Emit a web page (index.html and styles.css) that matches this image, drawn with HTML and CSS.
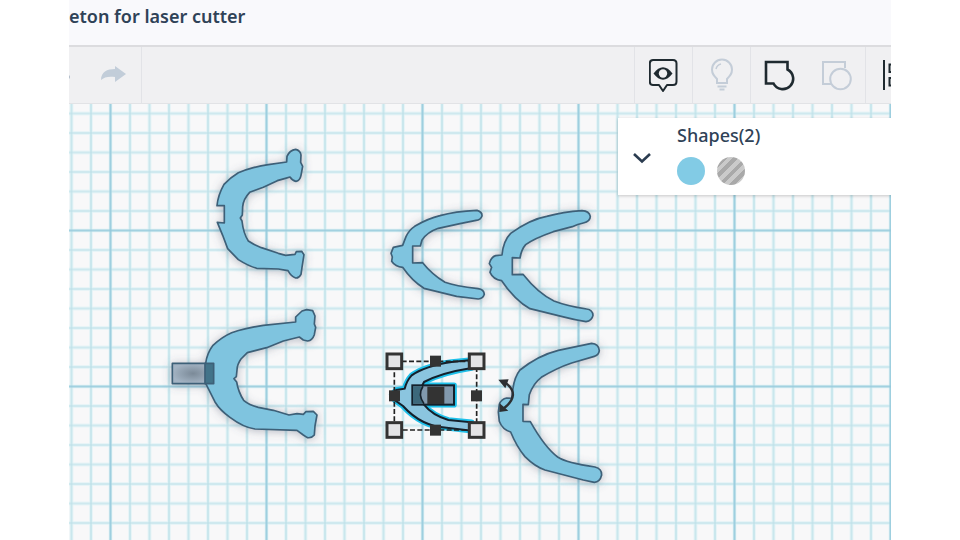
FILE: index.html
```html
<!DOCTYPE html>
<html lang="en">
<head>
    <meta charset="UTF-8">
    <meta name="viewport" content="width=device-width, initial-scale=1.0">
    <title>Shape Editor</title>
    <link rel="stylesheet" href="styles.css">
</head>
<body>
    <div class="editor">

        <header class="title-bar">
            <h1 class="title">eton for laser cutter</h1>
        </header>

        <!-- Toolbar -->
        <div class="toolbar">
            <div class="tool-group history">
                <button type="button" class="tool cut-left" aria-label="Undo">
                    <svg width="2" height="10" viewBox="0 0 2 10"><path d="M0 5Q2 7 0 9" fill="#aeb9c6"/></svg>
                </button>
                <button type="button" class="tool" aria-label="Redo">
                    <svg width="26" height="20" viewBox="0 0 26 20"><path d="M1 15C1 7 7 4 15 4V1L26 9L15 17V12C9 11 4 12 1 15Z" fill="#c2cdd9"/></svg>
                </button>
            </div>
            <div class="tool-group">
                <button type="button" class="tool" aria-label="Show all">
                    <svg width="30" height="34" viewBox="0 0 30 34" fill="none" stroke="#1f2a30">
                        <path d="M5 2H24Q27.500 2 27.500 5.500V23.500Q27.500 27 24 27H18L14 33L10 27H4Q.8 27 .8 23.500V5.500Q.8 2 4 2Z" stroke-width="2" stroke-linejoin="round"/>
                        <path d="M4.500 15.500Q14 3 23.500 15.500Q14 28 4.500 15.500Z" fill="#1f2a30" stroke="none"/>
                        <circle cx="14" cy="15.500" r="4.200" fill="#f0f0f2" stroke="none"/>
                    </svg>
                </button>
            </div>
            <div class="tool-group">
                <button type="button" class="tool" aria-label="Hide selected">
                    <svg width="24" height="34" viewBox="0 0 24 34" fill="none" stroke="#c4cdd8" stroke-width="2">
                        <path d="M7 25V21C4 18 2 16 2 11.500A10 10 0 0 1 22 11.500C22 16 20 18 17 21V25Z"/>
                        <path d="M6 11Q7 7 11 6" stroke-width="1.500"/>
                        <path d="M7.500 28.500H16.500M9.500 31.500H14.500"/>
                    </svg>
                </button>
            </div>
            <div class="tool-group">
                <button type="button" class="tool" aria-label="Group">
                    <svg width="32" height="32" viewBox="0 0 32 32" fill="none" stroke="#1f2a30" stroke-width="2.600">
                        <path d="M2 3H23.500V10.500A10.400 10.400 0 1 1 9.500 24.500H2Z"/>
                    </svg>
                </button>
                <button type="button" class="tool" aria-label="Ungroup">
                    <svg width="32" height="32" viewBox="0 0 32 32" fill="none" stroke="#c4cdd8" stroke-width="2">
                        <path d="M10 25H2V3H24V9"/>
                        <circle cx="19.500" cy="20" r="10.300"/>
                    </svg>
                </button>
            </div>
            <div class="tool-group">
                <button type="button" class="tool cut-right" aria-label="Align">
                    <svg width="24" height="32" viewBox="0 0 24 32" fill="none" stroke="#1f2a30" stroke-width="2">
                        <path d="M2 1V31"/>
                        <path d="M22 5.500H7.500V13H22M22 19H7.500V26.500H22"/>
                    </svg>
                </button>
            </div>
        </div>

        <!-- Workplane -->
        <main class="workplane">
            <svg class="drawing" role="img" aria-label="Workplane with shapes">
                <defs>
                    <pattern id="minor" x="41.500" y="126.500" width="19.500" height="19.500" patternUnits="userSpaceOnUse">
                        <path d="M0 0H19.500M0 0V19.500M19.500 0V19.500M0 19.500H19.500" stroke="#e2f3f6" stroke-width="3.400" fill="none"/>
                        <path d="M0 0H19.500M0 0V19.500M19.500 0V19.500M0 19.500H19.500" stroke="#bce0e8" stroke-width="1.200" fill="none"/>
                    </pattern>
                    <pattern id="major" x="41.500" y="126.500" width="156" height="156" patternUnits="userSpaceOnUse">
                        <path d="M0 0H156M0 0V156M156 0V156M0 156H156" stroke="#93c9dc" stroke-width="1.600" fill="none"/>
                    </pattern>
                    <filter id="shade" x="-20%" y="-20%" width="140%" height="140%">
                        <feDropShadow dx="0" dy="3" stdDeviation="14" flood-color="#4d5870" flood-opacity="0.4"/>
                    </filter>
                    <radialGradient id="holeFill">
                        <stop offset="0" stop-color="#7b8a98"/>
                        <stop offset="1" stop-color="#a3b3c3"/>
                    </radialGradient>
                </defs>
                <rect width="100%" height="100%" fill="url(#minor)"/>
                <rect width="100%" height="100%" fill="url(#major)"/>

                <!-- Upper left jaw -->
                <g class="shape" transform="translate(131 36) scale(0.3333)">
                    <path d="M260 66L261 49Q269 30 287 28Q301 31 303 45L302 67L308 79L303 106Q300 122 288 124Q278 123 270 111L256 115L232 122L190 142L149 157Q130 177 128 200L127 225L121 234L126 243Q130 280 145 303Q159 313 184 323L235 340L257 346L285 343L289 335L305 334L312 344L306 382L303 403Q297 415 287 414Q273 409 264 392L235 387L170 385Q145 378 115 359L83 326L68 286L52 247L73 249V197H51Q54 165 72 133Q90 113 115 98Q160 80 205 74Z"/>
                </g>

                <!-- Lower left jaw with hole box -->
                <g class="shape" transform="translate(91 196) scale(0.3333)">
                    <rect x="37" y="190" width="124" height="61" fill="url(#holeFill)"/>
                    <path d="M407 66V51L426 33L440 29L458 32L465 48L463 72L467 82L463 104Q457 121 443 123L430 120L418 111L370 123L320 143L262 158L243 177Q231 194 231 210L229 230L222 236L230 246Q235 276 251 301Q267 315 295 322L340 331L387 345L411 341L430 343L438 335L460 334L471 345L465 378L463 405Q455 415 442 413L430 405L411 391L285 387Q250 382 210 352Q180 331 165 306L137 250V190Q141 160 159 136Q185 111 215 98Q254 84 310 76Z"/>
                    <rect x="135" y="190" width="26" height="61" fill="#427389"/>
                </g>

                <!-- Middle jaws -->
                <g class="shape" transform="translate(311 96) scale(0.3333)">
                    <path d="M68 136L78 110Q86 91 104 79Q145 55 180 47Q225 34 291 31Q307 35 306 48Q302 60 288 61L240 71L175 85Q143 96 126 120L121 138H98V189L128 188Q155 222 195 247Q225 258 294 266Q312 268 313 283Q309 296 295 297L230 289L132 265Q96 243 68 202Q46 201 35 184L37 171L33 160L40 142Z"/>
                    <path d="M366 165Q370 122 392 100Q450 58 500 49Q550 36 606 32Q628 33 631 49Q631 65 610 69Q593 72 577 80L520 95Q460 116 437 134Q424 149 420 174L397 173V224L429 223Q475 281 522 303Q560 318 620 327Q638 329 639 346Q636 362 618 365Q585 360 547 350L450 326Q405 301 365 242Q340 239 330 217L335 202L328 191Q333 171 347 167Z"/>
                </g>

                <!-- Lower right jaw -->
                <g class="shape" transform="translate(306 236) scale(0.3333)">
                    <path d="M410 175L414 145Q419 110 435 90Q490 46 550 31L650 10Q671 11 673 32Q671 46 658 49L590 69Q545 84 499 112Q475 130 463 164L460 194L444 193V244L466 245Q510 323 548 351Q575 369 660 381Q681 386 680 405Q675 426 658 427L625 420L510 390Q480 380 450 350Q425 320 407 276Q382 269 373 244L370 216L373 193Q379 177 395 174Z"/>
                </g>
                <g class="rotate-handle" transform="translate(306 236) scale(0.3333)">
                    <path d="M391 128Q440 165 384 207" fill="none" stroke="#2c2f32" stroke-width="7"/>
                    <path d="M370 119L401 118L391 145ZM374 190L373 216L400 212Z" fill="#2c2f32"/>
                </g>

                <!-- Selected shapes -->
                <g class="selection" transform="translate(306 236) scale(0.3333)">
                    <path class="halo" d="M290 60L230 66Q150 78 110 106Q95 122 89 146L64 150L50 164L60 181L84 198Q140 260 215 263L290 272V247L220 240Q172 226 147 194Q125 164 147 126Q200 98 290 84Z"/>
                    <rect class="halo" x="112" y="136" width="125" height="58"/>
                    <path class="picked-shape" d="M290 60L230 66Q150 78 110 106Q95 122 89 146L64 150L50 164L60 181L84 198Q140 260 215 263L290 272V247L220 240Q172 226 147 194Q125 164 147 126Q200 98 290 84Z"/>
                    <rect class="picked-hole" x="112" y="136" width="125" height="58"/>
                    <path d="M114 139H144Q127 165 147 191H114Z" fill="#3c687b"/>
                    <path d="M144 139Q127 165 147 191" fill="none" stroke="#17212b" stroke-width="5"/>
                    <rect x="157" y="140" width="51" height="52" fill="#333"/>

                    <rect class="bounds" x="58" y="64" width="247" height="206"/>
                    <g fill="#333">
                        <rect x="165" y="47" width="33" height="33"/>
                        <rect x="165" y="254" width="33" height="33"/>
                        <rect x="42" y="151" width="33" height="33"/>
                        <rect x="288" y="151" width="33" height="33"/>
                    </g>
                    <g class="corners">
                        <rect x="36" y="42" width="44" height="44"/>
                        <rect x="283" y="42" width="44" height="44"/>
                        <rect x="36" y="248" width="44" height="44"/>
                        <rect x="283" y="248" width="44" height="44"/>
                    </g>
                </g>
            </svg>

            <!-- Shape inspector -->
            <section class="inspector">
                <button type="button" class="collapse" aria-label="Collapse">
                    <svg width="20" height="12" viewBox="0 0 20 12"><path d="M2 2L10 9.500L18 2" fill="none" stroke="#2b3c50" stroke-width="2.600"/></svg>
                </button>
                <div class="inspector-body">
                    <h2 class="inspector-title">Shapes(2)</h2>
                    <div class="swatches">
                        <button type="button" class="swatch solid" aria-label="Solid"></button>
                        <button type="button" class="swatch hole" aria-label="Hole"></button>
                    </div>
                </div>
            </section>
        </main>

    </div>
</body>
</html>
```
FILE: styles.css
```css
* {
    box-sizing: border-box;
}
body {
    margin: 0;
    background-color: #fff;
    font-family: "Noto Sans", "Open Sans", sans-serif;
    color: #2f4257;
}
button {
    padding: 0;
    border: none;
    background: none;
    cursor: pointer;
}
.editor {
    display: flex;
    flex-direction: column;
    min-height: 100vh;
    margin: 0 69px;
    overflow: hidden;
}
.title-bar {
    padding: 4px 0 17px;
    background-color: #f9f9fc;
}
.title {
    margin: 0;
    font-size: 18px;
    line-height: 24px;
    font-weight: 600;
}
.toolbar {
    display: flex;
    height: 59px;
    border-top: 2px solid #dcdcdf;
    border-bottom: 1px solid #e2e3e6;
    background-color: #f0f0f2;
}
.tool-group {
    display: flex;
    border-left: 1px solid #e2e3e7;
}
.history {
    margin-right: auto;
    border-left: none;
    border-right: 1px solid #e2e3e7;
}
.tool {
    display: flex;
    align-items: center;
    justify-content: center;
    width: 57px;
}
.cut-left {
    width: 15px;
    justify-content: flex-start;
}
.cut-right {
    width: 25px;
    padding-left: 16px;
    justify-content: flex-start;
    overflow: hidden;
}
.cut-right svg {
    flex: none;
}
.workplane {
    position: relative;
    flex: 1;
    background-color: #f8f8f9;
}
.drawing {
    position: absolute;
    width: 100%;
    height: 100%;
}
.shape {
    fill: #7fc4df;
    stroke: #3e6078;
    stroke-width: 5;
    stroke-linejoin: round;
    filter: url(#shade);
}
.halo {
    fill: none;
    stroke: #1fc0ea;
    stroke-width: 17;
    stroke-linejoin: round;
}
.picked-shape {
    fill: #8bc5df;
    stroke: #14202b;
    stroke-width: 6;
}
.picked-hole {
    fill: #8299ad;
    stroke: #14202b;
    stroke-width: 6;
}
.bounds {
    fill: none;
    stroke: #222;
    stroke-width: 5;
    stroke-dasharray: 15 7;
}
.corners {
    fill: #e4e4e6;
    stroke: #333;
    stroke-width: 9;
}
.inspector {
    position: absolute;
    top: 14px;
    right: 0;
    display: flex;
    width: 273px;
    padding: 5px 14px 10px;
    background-color: #fff;
    box-shadow: 0 1px 3px rgba(0, 0, 0, 0.2);
}
.collapse {
    width: 20px;
    margin-right: 25px;
    padding-top: 10px;
}
.inspector-title {
    margin: 0 0 10px;
    font-size: 18px;
    line-height: 24px;
    font-weight: 500;
}
.swatches {
    display: flex;
    gap: 12px;
}
.swatch {
    width: 28px;
    height: 28px;
    border-radius: 50%;
}
.solid {
    background-color: #82cbe5;
}
.hole {
    background: repeating-linear-gradient(135deg, #cacaca 0 4px, #a9a9a9 4px 8px);
}
```
